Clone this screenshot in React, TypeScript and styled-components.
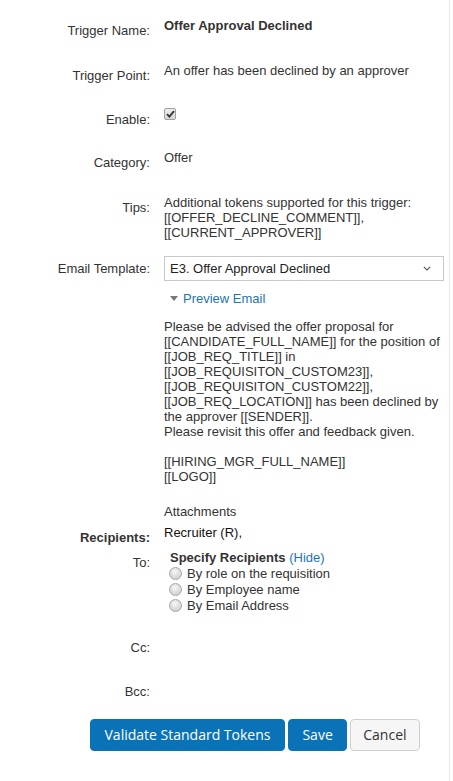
import React from "react";
import styled, { createGlobalStyle } from "styled-components";

const GlobalStyle = createGlobalStyle`
  html, body { margin: 0; padding: 0; background: #fff; }
  body { font-family: "Liberation Sans", Arial, sans-serif; font-size: 13px; color: #333; }
`;

const Page = styled.div`
  width: 449px;
  min-height: 100vh;
  border-right: 1px solid #e9e9e9;
  box-sizing: content-box;
  padding-top: 18px;
`;

const Row = styled.div<{ $top?: number }>`
  display: grid;
  grid-template-columns: 150px 280px;
  column-gap: 14px;
  align-items: start;
  margin-top: ${(p) => p.$top ?? 0}px;
  line-height: 15px;
`;

const Label = styled.div<{ $bold?: boolean }>`
  text-align: right;
  padding-top: 5px;
  line-height: 15px;
  color: #333;
  font-weight: ${(p) => (p.$bold ? 700 : 400)};
  white-space: nowrap;
`;

const Value = styled.div<{ $bold?: boolean; $dark?: boolean }>`
  line-height: 15px;
  font-weight: ${(p) => (p.$bold ? 700 : 400)};
  color: ${(p) => (p.$dark ? "#111" : "#333")};
`;

const CheckBox = styled.span`
  display: flex;
  align-items: center;
  justify-content: center;
  width: 10px;
  height: 10px;
  margin-top: 1px;
  border: 1px solid #a0a0a0;
  border-radius: 2px;
  background: linear-gradient(#eeeeee, #d6d6d6);
`;

const SelectBox = styled.div`
  display: flex;
  align-items: center;
  justify-content: space-between;
  height: 23px;
  border: 1px solid #c9c9c9;
  padding: 0 12px 0 5px;
  color: #222;
  background: #fff;
`;

const Toggle = styled.div`
  display: flex;
  align-items: center;
  gap: 5px;
  margin-top: 10px;
  padding-left: 6px;
  color: #1d74b4;
`;

const Body = styled.div`
  margin-top: 13px;
  white-space: nowrap;
`;

const Line = styled.div`
  height: 15px;
`;

const Attachments = styled.div`
  margin-top: 20px;
`;

const Specify = styled.div`
  padding-left: 6px;
  color: #333;
`;

const Strong = styled.span`
  font-weight: 700;
`;

const Link = styled.span`
  color: #1d74b4;
`;

const RadioRow = styled.div`
  display: flex;
  align-items: center;
  gap: 5px;
  height: 16px;
  padding-left: 5px;
  color: #333;
`;

const Radio = styled.span`
  width: 11px;
  height: 11px;
  border-radius: 50%;
  border: 1px solid #a6a6a6;
  background: radial-gradient(circle at 45% 35%, #f6f6f6 0%, #d9d9d9 60%, #c4c4c4 100%);
  flex: none;
`;

const Buttons = styled.div`
  display: flex;
  gap: 3px;
  margin-top: 20px;
  padding-left: 90px;
`;

const Button = styled.button<{ $primary?: boolean }>`
  font-family: "Open Sans", "Liberation Sans", sans-serif;
  font-size: 14px;
  line-height: 20px;
  height: 32px;
  padding: 5px ${(p) => (p.$primary ? "13.5px" : "12px")};
  border-radius: 4px;
  border: 1px solid ${(p) => (p.$primary ? "#0a73b7" : "#cfcfcf")};
  background: ${(p) => (p.$primary ? "#0a73b7" : "#f6f6f6")};
  color: ${(p) => (p.$primary ? "#fff" : "#333")};
  cursor: pointer;
`;

const bodyLines = [
  "Please be advised the offer proposal for",
  "[[CANDIDATE_FULL_NAME]] for the position of",
  "[[JOB_REQ_TITLE]] in",
  "[[JOB_REQUISITON_CUSTOM23]],",
  "[[JOB_REQUISITON_CUSTOM22]],",
  "[[JOB_REQ_LOCATION]] has been declined by",
  "the approver [[SENDER]].",
  "Please revisit this offer and feedback given.",
  "",
  "[[HIRING_MGR_FULL_NAME]]",
  "[[LOGO]]",
];

const radios = ["By role on the requisition", "By Employee name", "By Email Address"];

export default function App() {
  return (
    <>
      <GlobalStyle />
      <Page>
        <Row>
          <Label>Trigger Name:</Label>
          <Value $bold>Offer Approval Declined</Value>
        </Row>
        <Row $top={25}>
          <Label>Trigger Point:</Label>
          <Value>An offer has been declined by an approver</Value>
        </Row>
        <Row $top={24}>
          <Label>Enable:</Label>
          <Value>
            <CheckBox>
              <svg width="9" height="8" viewBox="0 0 9 8">
                <path d="M1 4.2 L3.4 6.6 L8 1.2" fill="none" stroke="#333" strokeWidth="1.8" />
              </svg>
            </CheckBox>
          </Value>
        </Row>
        <Row $top={23}>
          <Label>Category:</Label>
          <Value>Offer</Value>
        </Row>
        <Row $top={25}>
          <Label>Tips:</Label>
          <Value>
            Additional tokens supported for this trigger:
            <br />
            [[OFFER_DECLINE_COMMENT]],
            <br />
            [[CURRENT_APPROVER]]
          </Value>
        </Row>
        <Row $top={16}>
          <Label>Email Template:</Label>
          <Value>
            <SelectBox>
              <span>E3. Offer Approval Declined</span>
              <svg width="8" height="5" viewBox="0 0 8 5">
                <path d="M0.8 0.8 L4 4 L7.2 0.8" fill="none" stroke="#555" strokeWidth="1.1" />
              </svg>
            </SelectBox>
            <Toggle>
              <svg width="8" height="6" viewBox="0 0 8 6">
                <path d="M0 0 L8 0 L4 5 Z" fill="#777" />
              </svg>
              <span>Preview Email</span>
            </Toggle>
            <Body>
              {bodyLines.map((l, i) => (
                <Line key={i}>{l}</Line>
              ))}
            </Body>
            <Attachments>Attachments</Attachments>
          </Value>
        </Row>
        <Row $top={6}>
          <Label $bold>Recipients:</Label>
          <Value $dark>Recruiter (R),</Value>
        </Row>
        <Row $top={5}>
          <Label>To:</Label>
          <Value>
            <Specify>
              <Strong>Specify Recipients</Strong> <Link>(Hide)</Link>
            </Specify>
            {radios.map((r) => (
              <RadioRow key={r}>
                <Radio />
                <span>{r}</span>
              </RadioRow>
            ))}
          </Value>
        </Row>
        <Row $top={22}>
          <Label>Cc:</Label>
          <Value />
        </Row>
        <Row $top={24}>
          <Label>Bcc:</Label>
          <Value />
        </Row>
        <Buttons>
          <Button $primary>Validate Standard Tokens</Button>
          <Button $primary>Save</Button>
          <Button>Cancel</Button>
        </Buttons>
      </Page>
    </>
  );
}
